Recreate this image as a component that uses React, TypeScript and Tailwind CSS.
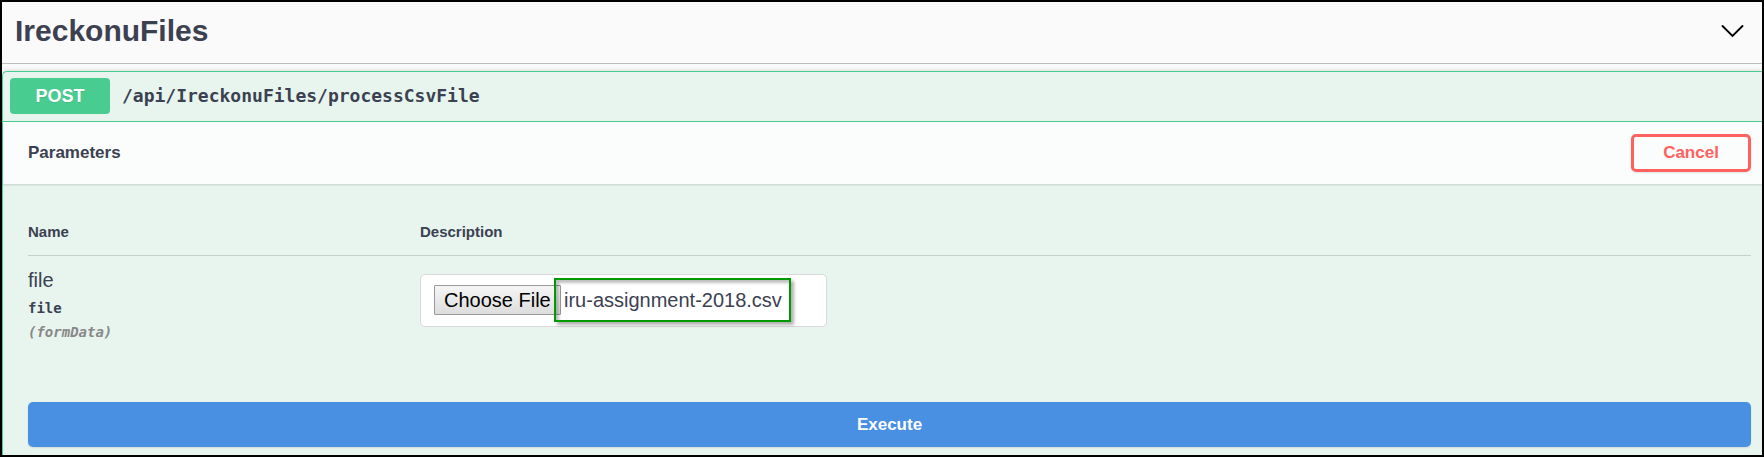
import { useState } from "react";

export default function App() {
  const [fileName, setFileName] = useState("iru-assignment-2018.csv");

  return (
    <main className="flex min-h-screen flex-col overflow-hidden border-2 border-black bg-[#fafafa] font-['Liberation_Sans',Arial,sans-serif] text-[#3b4151]">
      <header className="flex h-[62px] items-center justify-between border-b border-[#bcbec2] pr-[18px] pb-1 pl-[13px]">
        <h1 className="text-[30px] leading-9 font-bold">IreckonuFiles</h1>
        <button type="button" aria-label="Collapse section" className="text-black">
          <svg width="23" height="14" viewBox="0 0 23 14" fill="none" stroke="currentColor" strokeWidth="1.9" strokeLinecap="round">
            <path d="M1.5 2 11.5 12 21.5 2" />
          </svg>
        </button>
      </header>

      <section className="mt-[7px] flex-1 rounded-tl-[5px] border-t border-l border-[#49cc90] bg-[#e7f5ee] shadow-[0_0_4px_rgba(0,0,0,0.19)]">
        <div className="flex items-center gap-3 border-b border-[#49cc90] px-[7px] pt-1.5 pb-[7px]">
          <span className="w-[100px] rounded-[4px] bg-[#49cc90] text-center text-[18px] leading-9 font-bold text-white [text-shadow:0_1px_0_rgba(0,0,0,0.1)]">
            POST
          </span>
          <span className="font-['DejaVu_Sans_Mono',monospace] text-[18px] leading-6 font-bold">
            /api/IreckonuFiles/processCsvFile
          </span>
        </div>

        <div className="flex items-center justify-between bg-[#fbfdfc] py-3 pr-[11px] pl-[25px] shadow-[0_1px_2px_rgba(0,0,0,0.15)]">
          <h2 className="text-[17px] leading-6 font-bold">Parameters</h2>
          <button
            type="button"
            className="h-[38px] w-[120px] rounded-[5px] border-3 border-[#ff6060] text-[17px] font-bold text-[#ff6060] shadow-[0_1px_2px_rgba(0,0,0,0.1)]"
          >
            Cancel
          </button>
        </div>

        <div className="pt-[38px] pr-[11px] pl-[25px]">
          <table className="w-full border-collapse text-left">
            <thead>
              <tr className="border-b border-[#c3d2cf] text-[15px] leading-5">
                <th className="w-[392px] pb-[13px] font-bold">Name</th>
                <th className="pb-[13px] font-bold">Description</th>
              </tr>
            </thead>
            <tbody>
              <tr className="align-top">
                <td className="pt-3">
                  <div className="text-[20px] leading-6">file</div>
                  <div className="pt-1 font-['DejaVu_Sans_Mono',monospace] text-[14px] leading-6 font-bold">file</div>
                  <div className="font-['DejaVu_Sans_Mono',monospace] text-[14px] leading-6 font-bold text-[#888888] italic">
                    (formData)
                  </div>
                </td>
                <td className="pt-[18px]">
                  <label className="flex h-[53px] w-[407px] cursor-pointer items-center rounded-[5px] border border-[#d9d9d9] bg-white px-[13px] pb-0.5 text-[20px] leading-6">
                    <input
                      type="file"
                      aria-label="file"
                      className="sr-only"
                      onChange={(e) => setFileName(e.target.files?.[0]?.name ?? "No file chosen")}
                    />
                    <span className="w-[127px] shrink-0 rounded-[1px] border border-[#999999] bg-linear-to-b from-[#f6f6f6] to-[#dddddd] px-[9px] py-0.5 whitespace-nowrap text-black">
                      Choose File
                    </span>
                    <span className="relative -ml-[7px] border-2 border-[#009a00] py-2 pr-[7px] pl-2 whitespace-nowrap shadow-[3px_3px_3px_rgba(0,0,0,0.3),inset_3px_3px_3px_rgba(0,0,0,0.25)]">
                      {fileName}
                    </span>
                  </label>
                </td>
              </tr>
            </tbody>
          </table>

          <button
            type="button"
            className="mt-[58px] h-[45px] w-full rounded-[5px] bg-[#4990e2] text-[17px] font-bold text-white shadow-[0_1px_2px_rgba(0,0,0,0.1)]"
          >
            Execute
          </button>
        </div>
      </section>
    </main>
  );
}
